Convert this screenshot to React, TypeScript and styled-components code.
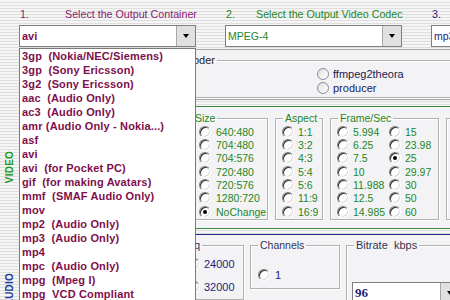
import React from "react";
import styled, { createGlobalStyle, css } from "styled-components";

const GlobalStyle = createGlobalStyle`
  html, body { margin: 0; padding: 0; }
  body { font-family: "Liberation Sans", Arial, sans-serif; }
  #root { width: 450px; height: 300px; }
`;

const Page = styled.div`
  position: relative;
  width: 450px;
  height: 300px;
  overflow: hidden;
  background: repeating-linear-gradient(
    to bottom,
    #f5f5f5 0px,
    #f5f5f5 2px,
    #dedede 2px,
    #dedede 3px
  );
  font-family: "Liberation Sans", Arial, sans-serif;
`;

const Sheet = styled.div`
  width: 520px;
`;

/* ---------- header ---------- */
const HeaderRow = styled.div`
  display: flex;
  box-sizing: border-box;
  height: 25px;
  padding: 7px 0 0 19px;
`;

const Step = styled.div<{ $w: number }>`
  display: flex;
  flex: none;
  width: ${(p) => p.$w}px;
  font-size: 10.7px;
  line-height: 14px;
  white-space: nowrap;
`;

const StepNum = styled.span<{ $w: number; $color: string }>`
  flex: none;
  width: ${(p) => p.$w}px;
  padding-left: 1px;
  box-sizing: border-box;
  color: ${(p) => p.$color};
`;

const StepTitle = styled.span<{ $color: string }>`
  color: ${(p) => p.$color};
`;

/* ---------- combos ---------- */
const ComboRow = styled.div`
  display: flex;
  gap: 29px;
  padding-left: 19px;
  height: 22px;
`;

const Combo = styled.div<{ $w: number; $h?: number }>`
  display: flex;
  flex: none;
  box-sizing: border-box;
  width: ${(p) => p.$w}px;
  height: ${(p) => p.$h ?? 22}px;
  border: 1px solid #7f7f7f;
  background: #fff;
`;

const ComboValue = styled.div<{ $color: string; $bold?: boolean; $serif?: boolean; $size?: number }>`
  flex: 1;
  padding-left: 2px;
  font-size: ${(p) => p.$size ?? 11}px;
  font-weight: ${(p) => (p.$bold ? "bold" : "normal")};
  font-family: ${(p) =>
    p.$serif ? `"Liberation Serif", "Times New Roman", serif` : `"Liberation Sans", Arial, sans-serif`};
  color: ${(p) => p.$color};
  display: flex;
  align-items: center;
  white-space: nowrap;
  overflow: hidden;
`;

const ComboButton = styled.div`
  flex: none;
  width: 18px;
  background: #e0e0e0;
  border-left: 1px solid #a8a8a8;
  display: flex;
  align-items: center;
  justify-content: center;
`;

const Arrow = styled.span`
  width: 0;
  height: 0;
  border-left: 3.5px solid transparent;
  border-right: 3.5px solid transparent;
  border-top: 4px solid #000;
`;

/* ---------- sections ---------- */
const Sections = styled.div`
  margin-top: 2px;
`;

const Section = styled.div<{ $mt: number }>`
  display: flex;
  margin-top: ${(p) => p.$mt}px;
`;

const Side = styled.div`
  flex: none;
  width: 19px;
  display: flex;
  align-items: center;
  justify-content: center;
`;

const SideText = styled.span<{ $color: string }>`
  writing-mode: vertical-rl;
  transform: rotate(180deg);
  font-size: 10px;
  font-weight: bold;
  letter-spacing: 0.2px;
  color: ${(p) => p.$color};
`;

const Panel = styled.div<{ $h: number; $border: string; $pl: number; $pt: number; $gap?: number }>`
  flex: none;
  box-sizing: border-box;
  width: 490px;
  height: ${(p) => p.$h}px;
  border: 1px solid ${(p) => p.$border};
  background: #f3f3f6;
  padding: ${(p) => p.$pt}px 0 0 ${(p) => p.$pl}px;
  display: flex;
  align-items: flex-start;
  gap: ${(p) => p.$gap ?? 7}px;
`;

const Group = styled.fieldset<{ $w: number; $pb?: number; $mt?: number; $h?: number }>`
  margin: ${(p) => p.$mt ?? 0}px 0 0 0;
  box-sizing: border-box;
  flex: none;
  min-width: 0;
  width: ${(p) => p.$w}px;
  ${(p) => (p.$h ? `height: ${p.$h}px;` : "")}
  padding: 0 0 ${(p) => p.$pb ?? 1}px 0;
  border: 1px solid #b0b0b0;
  box-shadow: inset 1px 1px 0 #ffffff, 1px 1px 0 #ffffff;
`;

const Legend = styled.legend<{ $color: string; $size?: number }>`
  margin-left: 7px;
  padding: 0 2px;
  font-size: ${(p) => p.$size ?? 10.5}px;
  line-height: 13px;
  color: ${(p) => p.$color};
  white-space: pre;
`;

const OptionGrid = styled.div<{ $cols: string; $row: number; $pt?: number; $pl: number }>`
  display: grid;
  grid-template-columns: ${(p) => p.$cols};
  grid-auto-rows: ${(p) => p.$row}px;
  padding: ${(p) => p.$pt ?? 0}px 0 0 ${(p) => p.$pl}px;
`;

const Option = styled.label<{ $color: string; $size?: number; $gap?: number }>`
  display: flex;
  align-items: center;
  gap: ${(p) => p.$gap ?? 4}px;
  font-size: ${(p) => p.$size ?? 10.5}px;
  color: ${(p) => p.$color};
  white-space: nowrap;
`;

const Radio = styled.span<{ $checked?: boolean; $xp?: boolean }>`
  position: relative;
  flex: none;
  box-sizing: border-box;
  width: 12px;
  height: 12px;
  border-radius: 50%;
  ${(p) =>
    p.$xp
      ? css`
          border: 1px solid #8a8d9a;
          background: linear-gradient(135deg, #dcdcdc 0%, #f4f4f4 60%, #ffffff 100%);
        `
      : css`
          background: #fff;
          border: 1px solid;
          border-color: #808080 #ffffff #ffffff #808080;
          box-shadow: inset 1px 1px 0 #303030, inset -1px -1px 0 #d8d8d8;
        `}
  ${(p) =>
    p.$checked &&
    css`
      &::after {
        content: "";
        position: absolute;
        left: 3px;
        top: 3px;
        width: 4px;
        height: 4px;
        border-radius: 50%;
        background: #000;
      }
    `}
`;

const BitrateSlot = styled.div`
  padding: 30px 0 0 5px;
`;

/* ---------- dropdown list (overlay menu) ---------- */
const DropList = styled.ul`
  position: absolute;
  top: 48px;
  left: 19px;
  z-index: 5;
  width: 177px;
  height: 270px;
  margin: 0;
  padding: 0;
  list-style: none;
  box-sizing: border-box;
  border: 1px solid #7a7a7a;
  background: #fff;
`;

const DropItem = styled.li`
  height: 14px;
  line-height: 14px;
  padding-left: 2px;
  font-size: 11px;
  font-weight: bold;
  letter-spacing: 0.15px;
  color: #7e0f4c;
  white-space: pre;
`;

/* ---------- data ---------- */
const containers = [
  "3gp  (Nokia/NEC/Siemens)",
  "3gp  (Sony Ericsson)",
  "3g2  (Sony Ericsson)",
  "aac  (Audio Only)",
  "ac3  (Audio Only)",
  "amr (Audio Only - Nokia...)",
  "asf",
  "avi",
  "avi  (for Pocket PC)",
  "gif  (for making Avatars)",
  "mmf  (SMAF Audio Only)",
  "mov",
  "mp2  (Audio Only)",
  "mp3  (Audio Only)",
  "mp4",
  "mpc  (Audio Only)",
  "mpg  (Mpeg I)",
  "mpg  VCD Compliant",
];

const sizes = ["640:480", "704:480", "704:576", "720:480", "720:576", "1280:720", "NoChange"];
const aspects = ["1:1", "3:2", "4:3", "5:4", "5:6", "11:9", "16:9"];
const fps = [
  "5.994", "15",
  "6.25", "23.98",
  "7.5", "25",
  "10", "29.97",
  "11.988", "30",
  "12.5", "50",
  "14.985", "60",
];
const freqs = ["16000", "24000", "22050", "32000"];

const PURPLE = "#8a1a6e";
const GREEN = "#1f861f";
const NAVY = "#1c1c78";

export default function App() {
  return (
    <>
      <GlobalStyle />
      <Page>
        <Sheet>
          <HeaderRow>
            <Step $w={206}>
              <StepNum $w={46} $color={PURPLE}>1.</StepNum>
              <StepTitle $color={PURPLE}>Select the Output Container</StepTitle>
            </Step>
            <Step $w={206}>
              <StepNum $w={31} $color={GREEN}>2.</StepNum>
              <StepTitle $color={GREEN}>Select the Output Video Codec</StepTitle>
            </Step>
            <Step $w={40}>
              <StepNum $w={31} $color={NAVY}>3.</StepNum>
            </Step>
          </HeaderRow>

          <ComboRow>
            <Combo $w={177}>
              <ComboValue $color="#7e0f4c" $bold>avi</ComboValue>
              <ComboButton><Arrow /></ComboButton>
            </Combo>
            <Combo $w={177}>
              <ComboValue $color={GREEN} $size={10.5}>MPEG-4</ComboValue>
              <ComboButton><Arrow /></ComboButton>
            </Combo>
            <Combo $w={177}>
              <ComboValue $color={NAVY} $size={10.5}>mp3</ComboValue>
              <ComboButton><Arrow /></ComboButton>
            </Combo>
          </ComboRow>

          <Sections>
            <Section $mt={0}>
              <Side />
              <Panel $h={51} $border="#a4a4a4" $pl={144} $pt={4}>
                <Group $w={330} $pb={2}>
                  <Legend $color="#222" $size={11}>Encoder</Legend>
                  <OptionGrid $cols="auto" $row={14} $pl={152}>
                    <Option $color="#1a1a50" $size={11}>
                      <Radio $xp />
                      ffmpeg2theora
                    </Option>
                    <Option $color="#1a1a50" $size={11}>
                      <Radio $xp />
                      producer
                    </Option>
                  </OptionGrid>
                </Group>
              </Panel>
            </Section>

            <Section $mt={6}>
              <Side>
                <SideText $color="#1e9a1e">VIDEO</SideText>
              </Side>
              <Panel $h={123} $border="#3d8c3d" $pl={165} $pt={5}>
                <Group $w={83}>
                  <Legend $color={GREEN}>Size</Legend>
                  <OptionGrid $cols="auto" $row={13.33} $pl={13}>
                    {sizes.map((s) => (
                      <Option key={s} $color={GREEN} $gap={5}>
                        <Radio $checked={s === "NoChange"} />
                        {s}
                      </Option>
                    ))}
                  </OptionGrid>
                </Group>
                <Group $w={48}>
                  <Legend $color={GREEN}>Aspect</Legend>
                  <OptionGrid $cols="auto" $row={13.33} $pl={6}>
                    {aspects.map((s) => (
                      <Option key={s} $color={GREEN}>
                        <Radio />
                        {s}
                      </Option>
                    ))}
                  </OptionGrid>
                </Group>
                <Group $w={109}>
                  <Legend $color={GREEN}>Frame/Sec</Legend>
                  <OptionGrid $cols="52px auto" $row={13.33} $pl={6}>
                    {fps.map((s) => (
                      <Option key={s} $color={GREEN}>
                        <Radio $checked={s === "25"} />
                        {s}
                      </Option>
                    ))}
                  </OptionGrid>
                </Group>
                <Group $w={80} $mt={6} $h={102} />
              </Panel>
            </Section>

            <Section $mt={5}>
              <Side>
                <SideText $color="#1f3f9f">AUDIO</SideText>
              </Side>
              <Panel $h={112} $border="#1e2a80" $pl={110} $pt={4} $gap={6}>
                <Group $w={114}>
                  <Legend $color="#333350">Sample Freq</Legend>
                  <OptionGrid $cols="51px auto" $row={23} $pl={6}>
                    {freqs.map((s) => (
                      <Option key={s} $color={NAVY} $size={11}>
                        <Radio />
                        {s}
                      </Option>
                    ))}
                  </OptionGrid>
                </Group>
                <Group $w={90}>
                  <Legend $color="#333350">Channels</Legend>
                  <OptionGrid $cols="auto" $row={23} $pt={11.5} $pl={7}>
                    <Option $color={NAVY} $size={11} $gap={5}>
                      <Radio />
                      1
                    </Option>
                  </OptionGrid>
                </Group>
                <Group $w={150}>
                  <Legend $color="#333350" $size={11}>Bitrate  kbps</Legend>
                  <BitrateSlot>
                    <Combo $w={108} $h={21}>
                      <ComboValue $color={NAVY} $bold $serif $size={13}>96</ComboValue>
                      <ComboButton><Arrow /></ComboButton>
                    </Combo>
                  </BitrateSlot>
                </Group>
              </Panel>
            </Section>
          </Sections>
        </Sheet>

        <DropList>
          {containers.map((c, i) => (
            <DropItem key={i}>{c}</DropItem>
          ))}
        </DropList>
      </Page>
    </>
  );
}
